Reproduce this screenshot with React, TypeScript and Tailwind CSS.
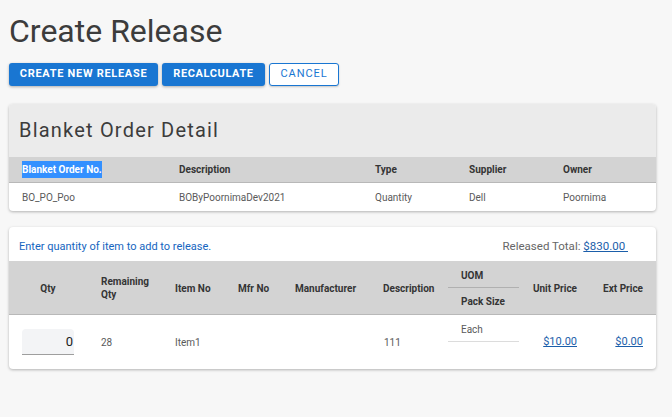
import type { ReactNode } from "react";

const detailColumns = ["Blanket Order No.", "Description", "Type", "Supplier", "Owner"];
const detailRow = ["BO_PO_Poo", "BOByPoornimaDev2021", "Quantity", "Dell", "Poornima"];

const itemGrid =
  "grid grid-cols-[79px_74px_63px_57px_88px_65px_71px_58px_66px] px-[13px]";

function HeaderCell({ children, className = "" }: { children: ReactNode; className?: string }) {
  return (
    <div className={`flex items-center text-[10px] font-bold leading-[13px] text-[#353535] ${className}`}>
      {children}
    </div>
  );
}

export default function App() {
  return (
    <div className="min-h-[417px] w-[672px] bg-[#f7f7f7] px-[9px] pb-6 font-['Roboto',sans-serif]">
      <h1 className="pt-[12px] text-[32px] font-normal leading-[38px] text-[#3c3c3c]">
        Create Release
      </h1>

      <div className="mt-[13px] flex gap-[4px]">
        <button className="h-[23px] w-[149px] rounded-[3px] bg-[#1976d2] text-[11px] font-bold tracking-[0.7px] text-white shadow-[0_1px_3px_rgba(0,0,0,0.3)]">
          CREATE NEW RELEASE
        </button>
        <button className="h-[23px] w-[103px] rounded-[3px] bg-[#1976d2] text-[11px] font-bold tracking-[0.6px] text-white shadow-[0_1px_3px_rgba(0,0,0,0.3)]">
          RECALCULATE
        </button>
        <button className="h-[23px] w-[70px] rounded-[3px] border border-[#1976d2] bg-white text-[11px] font-normal tracking-[0.9px] text-[#1976d2] shadow-[0_1px_2px_rgba(0,0,0,0.2)]">
          CANCEL
        </button>
      </div>

      <div className="mt-[18px] w-[647px] overflow-hidden rounded-[4px] bg-white shadow-[0_1px_3px_rgba(0,0,0,0.28)]">
        <div className="h-[53px] bg-[#ebebeb] px-[10px] pt-[14px]">
          <h2 className="text-[20px] font-normal leading-[24px] tracking-[1.2px] text-[#3c3c3c]">
            Blanket Order Detail
          </h2>
        </div>
        <div className="grid h-[26px] grid-cols-[157px_196px_94px_94px_1fr] border-b border-[#b8b8b8] bg-[#d3d3d3] pl-[13px]">
          {detailColumns.map((col, i) => (
            <HeaderCell key={col}>
              {i === 0 ? (
                <span className="bg-[#3390ff] py-[2px] text-white">{col}</span>
              ) : (
                col
              )}
            </HeaderCell>
          ))}
        </div>
        <div className="grid h-[28px] grid-cols-[157px_196px_94px_94px_1fr] items-center pl-[13px] text-[10px] text-[#5a5a5a]">
          {detailRow.map((val) => (
            <div key={val}>{val}</div>
          ))}
        </div>
      </div>

      <div className="mt-[16px] w-[647px] overflow-hidden rounded-[4px] bg-white shadow-[0_1px_3px_rgba(0,0,0,0.28)]">
        <div className="flex h-[34px] items-center justify-between pl-[10px] pr-[28px] pt-[6px]">
          <p className="text-[11px] text-[#1565c0]">Enter quantity of item to add to release.</p>
          <p className="text-[11.5px] text-[#666]">
            Released Total:{" "}
            <a className="text-[#1b5eaa] underline">$830.00&nbsp;</a>
          </p>
        </div>

        <div className={`${itemGrid} h-[54px] border-b border-[#b8b8b8] bg-[#d3d3d3]`}>
          <HeaderCell>
            <span className="w-[52px] text-center">Qty</span>
          </HeaderCell>
          <HeaderCell>
            <span>
              Remaining
              <br />
              Qty
            </span>
          </HeaderCell>
          <HeaderCell>Item No</HeaderCell>
          <HeaderCell>Mfr No</HeaderCell>
          <HeaderCell>Manufacturer</HeaderCell>
          <HeaderCell>Description</HeaderCell>
          <div className="flex flex-col text-[10px] font-bold text-[#353535]">
            <div className="flex h-[27px] items-center border-b border-[#b0b0b0] pl-[13px] pt-[2px]">UOM</div>
            <div className="flex h-[27px] items-center pl-[13px]">Pack Size</div>
          </div>
          <HeaderCell className="justify-end">Unit Price</HeaderCell>
          <HeaderCell className="justify-end">Ext Price</HeaderCell>
        </div>

        <div className={`${itemGrid} h-[54px] items-center text-[10px] text-[#5a5a5a]`}>
          <div>
            <div className="flex h-[26px] w-[52px] items-center justify-end rounded-t-[4px] border-b border-[#9e9e9e] bg-[#f3f4f6] pr-[1px] text-[13px] text-[#222]">
              0
            </div>
          </div>
          <div>28</div>
          <div>Item1</div>
          <div></div>
          <div></div>
          <div className="pl-[1px]">111</div>
          <div className="flex h-full flex-col">
            <div className="flex h-[27px] items-end border-b border-[#dcdcdc] pb-[4px] pl-[13px]">Each</div>
          </div>
          <div className="text-right">
            <a className="text-[11px] text-[#1b5eaa] underline">$10.00</a>
          </div>
          <div className="text-right">
            <a className="text-[11px] text-[#1b5eaa] underline">$0.00</a>
          </div>
        </div>
      </div>
    </div>
  );
}
